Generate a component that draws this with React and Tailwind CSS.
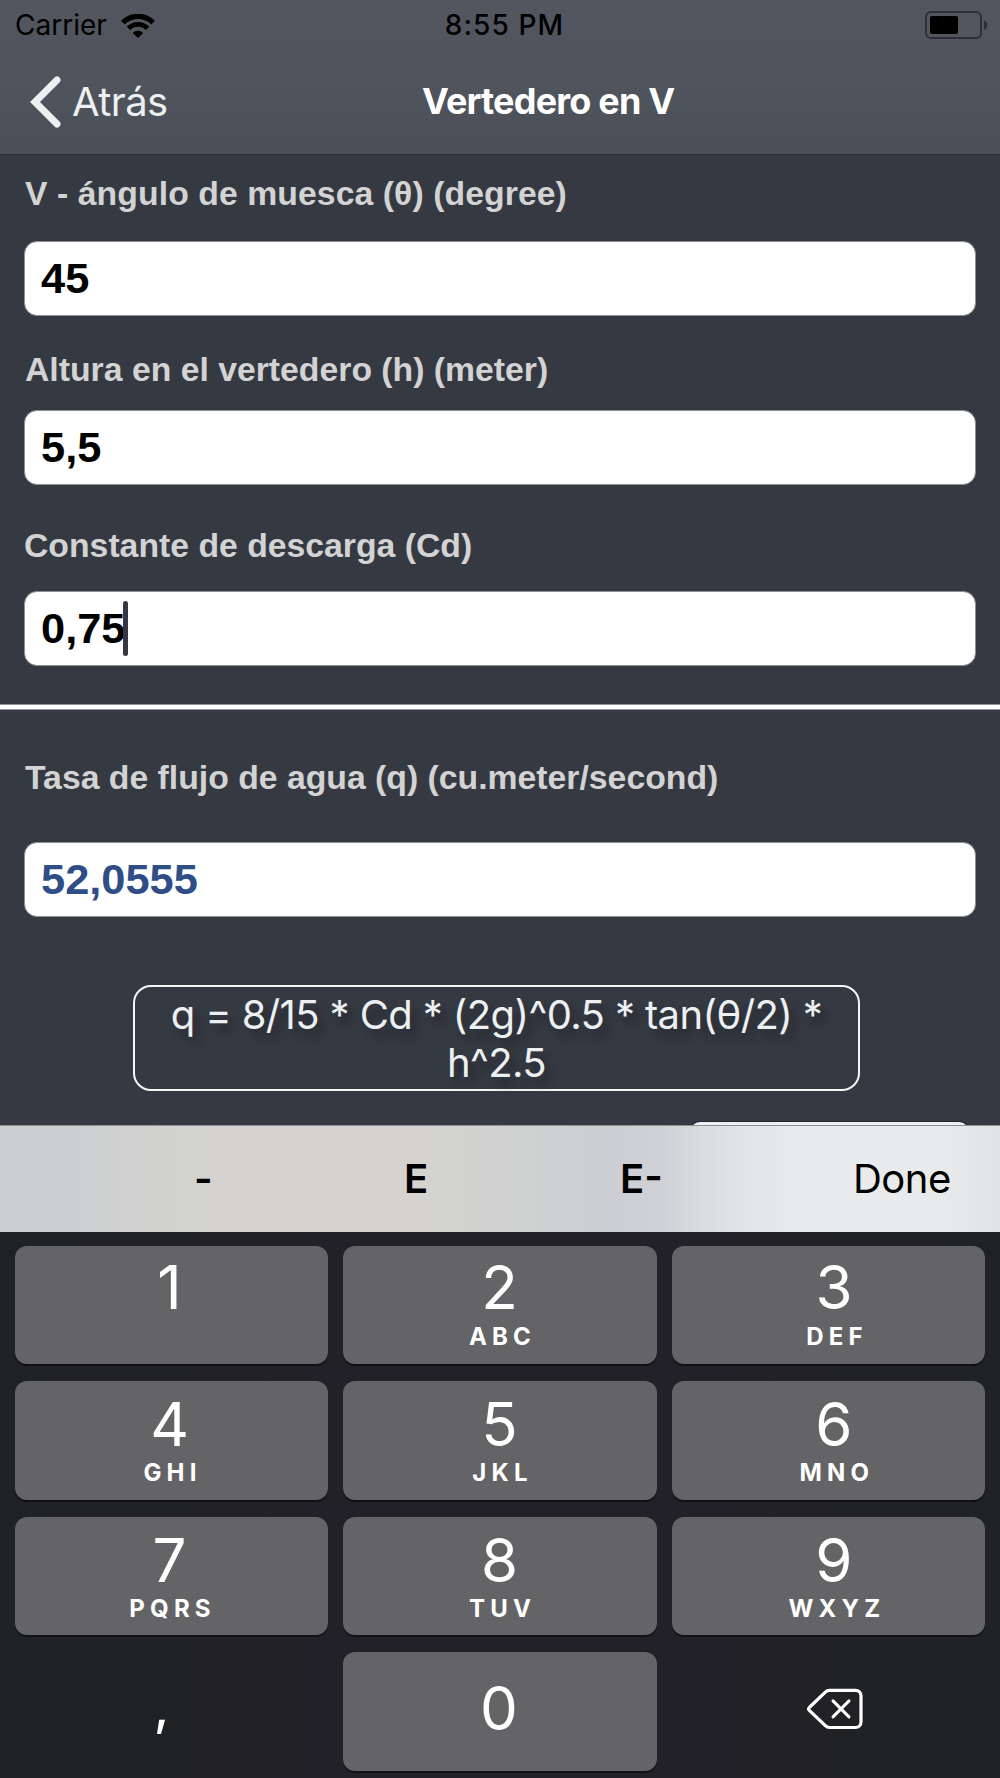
const KEYS = [
  { digit: "1", letters: "" },
  { digit: "2", letters: "ABC" },
  { digit: "3", letters: "DEF" },
  { digit: "4", letters: "GHI" },
  { digit: "5", letters: "JKL" },
  { digit: "6", letters: "MNO" },
  { digit: "7", letters: "PQRS" },
  { digit: "8", letters: "TUV" },
  { digit: "9", letters: "WXYZ" }
];

// The digits are not exactly centered in the outer columns
const COLUMN_PADDING = ["pr-[4px]", "pr-[1px]", "pl-[11px]"];

const WifiIcon = () => (
  <svg width="34" height="24" viewBox="0 0 34 24" fill="none" stroke="#000">
    <path d="M1.8 8.6a21.6 21.6 0 0 1 30.4 0" strokeWidth="5.2" />
    <path d="M7.4 14.3a13.6 13.6 0 0 1 19.2 0" strokeWidth="4.8" />
    <path d="M17 24l-5.2-5a7.2 7.2 0 0 1 10.4 0z" fill="#000" stroke="none" />
  </svg>
);

const BatteryIcon = () => (
  <svg width="63" height="28" viewBox="0 0 63 28" fill="none">
    <rect x="1" y="1" width="55" height="26" rx="5" stroke="#2c2f35" strokeWidth="2" />
    <rect x="5" y="5" width="28" height="18" rx="2" fill="#000" />
    <path d="M59 9c2.2 1 3.4 2.8 3.4 5s-1.2 4-3.4 5z" fill="#2c2f35" />
  </svg>
);

const BackspaceIcon = () => (
  <svg width="56" height="42" viewBox="0 0 56 42" fill="none" stroke="#fff" strokeLinecap="round" strokeLinejoin="round">
    <path
      d="M22.5 2.3H48.5a5.5 5.5 0 0 1 5.5 5.5V34a5.5 5.5 0 0 1-5.5 5.5H22.5a5.5 5.5 0 0 1-3.9-1.6L2.3 22.3a2 2 0 0 1 0-2.8L18.6 3.9a5.5 5.5 0 0 1 3.9-1.6z"
      strokeWidth="3.2"
    />
    <path d="M26 12.9L42 28.9M42 12.9L26 28.9" strokeWidth="3" />
  </svg>
);

const Label = ({ children, className = "" }) => (
  <label
    className={`block h-[40px] text-[33.75px] leading-[40px] font-bold whitespace-nowrap text-[#d3d3d3] [font-family:'Liberation_Sans',Arial,sans-serif] ${className}`}
  >
    {children}
  </label>
);

const Field = ({ value, active, className }) => (
  <div
    className={`flex h-[75px] items-center rounded-[13px] border border-[#8d9095] bg-white pl-[16px] text-[43.4px] font-bold [font-family:'Liberation_Sans',Arial,sans-serif] ${className}`}
  >
    <span className="pt-px">{value}</span>
    {active && <span className="-ml-[2px] h-[55px] w-[5px] rounded-full bg-[#353842]"></span>}
  </div>
);

const Key = ({ digit, letters, index }) => (
  <button
    className={`flex flex-col items-center rounded-[12px] bg-[#646467] shadow-[0_2px_0_#111115] ${COLUMN_PADDING[index % 3]} ${
      index < 3 ? "pt-[11px]" : "pt-[13px]"
    }`}
  >
    <span className="text-[60px] leading-[60px]">{digit}</span>
    {letters && (
      <span
        className={`-mr-[6px] text-[24px] leading-[30px] font-bold tracking-[5.2px] ${
          index < 3 ? "mt-[5px]" : "mt-[4px]"
        }`}
      >
        {letters}
      </span>
    )}
  </button>
);

export default function App() {
  return (
    <div className="flex h-[1778px] w-[1000px] flex-col overflow-hidden bg-[#353942] [font-family:Inter,Roboto,sans-serif]">
      {/* Header */}
      <header className="h-[155px] shrink-0 border-b border-[#2d3037] bg-linear-to-b from-[#52565f] via-[#50545d] to-[#4b4f58]">
        <div className="grid h-[50px] grid-cols-3 items-center pt-px pr-[12px] pl-[15px] text-[28px] leading-[49px] text-black">
          <div className="flex items-center gap-[14px]">
            <span>Carrier</span>
            <WifiIcon />
          </div>
          <span className="pl-[6px] text-center font-medium tracking-[1.1px]">8:55 PM</span>
          <div className="flex justify-end pb-px">
            <BatteryIcon />
          </div>
        </div>

        <div className="flex h-[104px] items-center">
          <div className="flex w-[422px] items-center pl-[30px] text-[#ecf0f1]">
            <svg width="32" height="52" viewBox="0 0 32 52" fill="none">
              <path
                d="M27 4L5 26l22 22"
                stroke="#ecf0f1"
                strokeWidth="7"
                strokeLinecap="round"
                strokeLinejoin="miter"
              />
            </svg>
            <span className="pl-[10px] text-[40px] tracking-[-0.6px]">Atrás</span>
          </div>
          <h1 className="pb-[2px] text-[36px] leading-[102px] font-[650] tracking-[-0.8px] whitespace-nowrap text-white">
            Vertedero en V
          </h1>
        </div>
      </header>

      {/* Form */}
      <main className="h-[970px] shrink-0 overflow-hidden">
        <section className="h-[549px] px-[24px] pt-[18px]">
          <Label className="pl-px tracking-[0.07px]">V - ángulo de muesca (θ) (degree)</Label>
          <Field value="45" className="mt-[28px] text-black" />
          <Label className="mt-[33px] pl-px">Altura en el vertedero (h) (meter)</Label>
          <Field value="5,5" className="mt-[21px] text-black" />
          <Label className="mt-[40px]">Constante de descarga (Cd)</Label>
          <Field value="0,75" active className="mt-[26px] text-black" />
        </section>

        <div className="h-[6px] border-y border-[#94969a] bg-white"></div>

        <section className="px-[24px] pt-[47px]">
          <Label className="pl-px">Tasa de flujo de agua (q) (cu.meter/second)</Label>
          <Field value="52,0555" className="mt-[45px] text-[#2f4e87]" />

          <div className="mt-[68px] ml-[109px] flex h-[106px] w-[727px] items-center justify-center rounded-[18px] border-2 border-[#f4f6f7] pt-px text-center text-[40px] leading-[48px] tracking-[-0.62px] whitespace-nowrap text-[#ecf0f1] [text-shadow:6px_8px_10px_rgba(0,0,0,0.35)]">
            <p>
              q = 8/15 * Cd * (2g)^0.5 * tan(θ/2) *
              <br />
              h^2.5
            </p>
          </div>

          {/* Top edge of the button hidden under the keyboard */}
          <div className="mt-[31px] ml-[666px] h-[80px] w-[279px] rounded-[10px] bg-[#ecf0f1] shadow-[0_0_0_1px_#24262c]"></div>
        </section>
      </main>

      {/* Keyboard toolbar */}
      <div className="h-[107px] shrink-0 bg-[linear-gradient(90deg,#cdced1_0%,#cdced1_6%,#d0d1d0_13%,#d4d3d0_21%,#d4d3d0_42%,#d0d1d1_52%,#cdced3_61%,#d0d1d6_66%,#dadbde_70%,#e3e4e6_74%,#e9eaeb_80%,#e9eaeb_94%,#e1e3e5_100%)]">
        <div className="flex h-full items-center border-t border-[#8f9194] pl-[194px] text-[40px] text-black">
          <span className="w-[210px] font-semibold">-</span>
          <span className="w-[216px] font-semibold">E</span>
          <span className="w-[233px] font-semibold">E-</span>
          <span className="tracking-[-0.5px]">Done</span>
        </div>
      </div>

      {/* Number pad */}
      <div className="grid flex-1 auto-rows-[118.4px] grid-cols-3 gap-x-[14.67px] gap-y-[17px] bg-[linear-gradient(90deg,#1f2225_0%,#222127_35%,#222127_70%,#1f2225_100%)] px-[14.67px] pt-[14px] text-white">
        {KEYS.map((key, i) => (
          <Key key={key.digit} digit={key.digit} letters={key.letters} index={i} />
        ))}
        <button className="flex justify-center pt-[25px] pr-[20px] text-[50px] leading-[60px] font-medium">,</button>
        <button className="flex justify-center rounded-[12px] bg-[#646467] pt-[26px] pr-[2px] text-[60px] leading-[60px] shadow-[0_2px_0_#111115]">
          0
        </button>
        <button className="flex justify-center pt-[36px] pl-[13px]">
          <BackspaceIcon />
        </button>
      </div>
    </div>
  );
}
